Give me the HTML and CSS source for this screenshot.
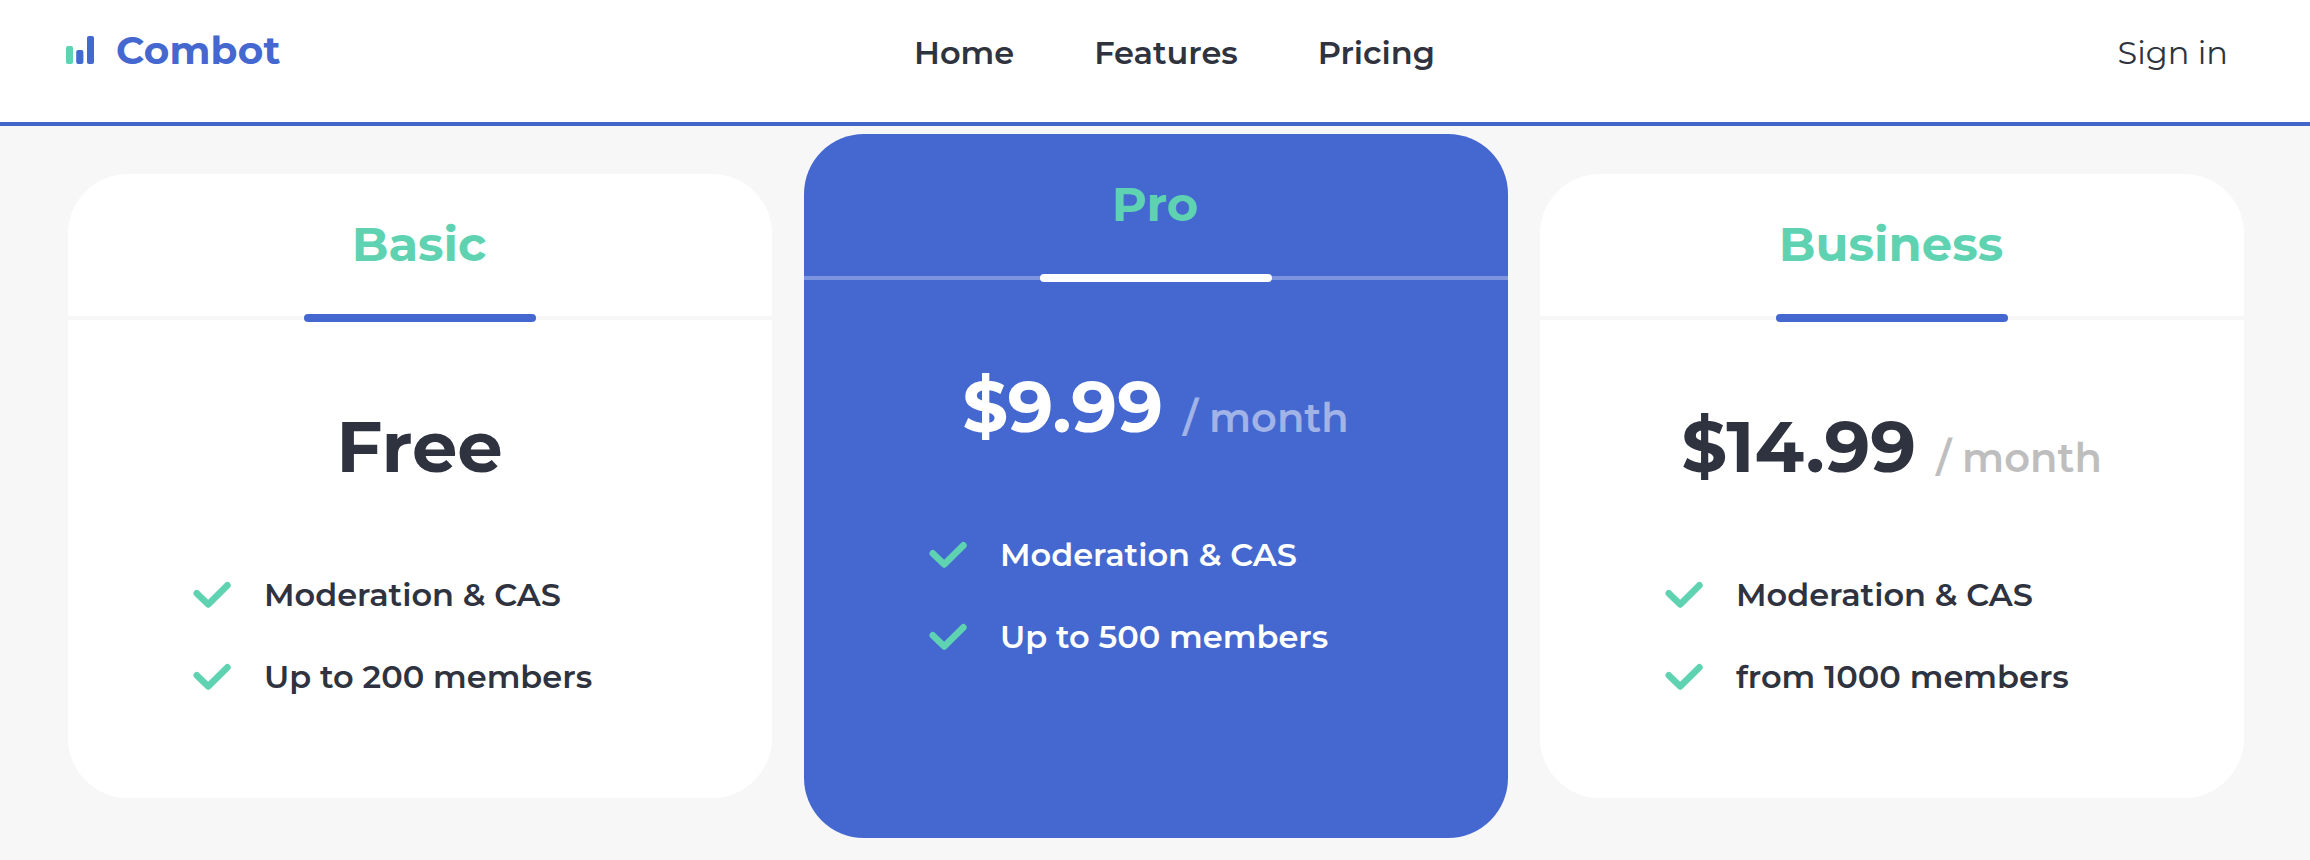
FILE: index.html
```html
<!DOCTYPE html>
<html lang="en">
<head>
  <meta charset="UTF-8"/>
  <meta name="viewport" content="width=device-width,initial-scale=1.0"/>
  <title>Combot - Pricing</title>
  <link rel="stylesheet" href="styles.css">
</head>
<body>
  <!-- Shared check icon -->
  <svg class="sprite" width="0" height="0">
    <symbol id="check" viewBox="0 0 40 30">
      <path d="M4.8 13.3L16.2 24.4L35.4 5.3"/>
    </symbol>
  </svg>

  <header class="header">
    <a class="logo" href="#">
      <svg class="logo-icon" viewBox="0 0 28 28">
        <rect class="bar-green" x="0" y="10" width="7" height="18" rx="2"/>
        <rect x="10.2" y="14" width="7.2" height="14" rx="2"/>
        <rect x="21" y="0" width="7" height="28" rx="2"/>
      </svg>
      <span class="logo-text">Combot</span>
    </a>
    <nav class="nav">
      <a href="#">Home</a>
      <a href="#">Features</a>
      <a href="#">Pricing</a>
    </nav>
    <a class="sign-in" href="#">Sign in</a>
  </header>

  <main class="plans">
    <section class="plan">
      <h2 class="plan-name">Basic</h2>
      <div class="price"><span class="amount">Free</span></div>
      <ul class="features">
        <li><svg class="check"><use href="#check"/></svg><span>Moderation &amp; CAS</span></li>
        <li><svg class="check"><use href="#check"/></svg><span>Up to 200 members</span></li>
      </ul>
    </section>

    <section class="plan plan-pro">
      <h2 class="plan-name">Pro</h2>
      <div class="price"><span class="amount">$9.99</span><span class="period">/ month</span></div>
      <ul class="features">
        <li><svg class="check"><use href="#check"/></svg><span>Moderation &amp; CAS</span></li>
        <li><svg class="check"><use href="#check"/></svg><span>Up to 500 members</span></li>
      </ul>
    </section>

    <section class="plan">
      <h2 class="plan-name">Business</h2>
      <div class="price"><span class="amount">$14.99</span><span class="period">/ month</span></div>
      <ul class="features">
        <li><svg class="check"><use href="#check"/></svg><span>Moderation &amp; CAS</span></li>
        <li><svg class="check"><use href="#check"/></svg><span>from 1000 members</span></li>
      </ul>
    </section>
  </main>
</body>
</html>
```
FILE: styles.css
```css
:root {
  --bg: #f7f7f7;
  --blue: #4468d0;
  --green: #5fd3b1;
  --text: #2f3340;
  --muted: #bebebe;
}
* { box-sizing: border-box; }
body {
  margin: 0;
  min-height: 860px;
  background: var(--bg); color: var(--text);
  font-family: Montserrat, Inter, sans-serif;
}
a { color: inherit; text-decoration: none; }
.sprite { position: absolute; }

.header {
  display: grid;
  grid-template-columns: 848px 1fr auto;
  align-items: center;
  height: 126px;
  padding: 0 82px 18px 66px;
  background: #fff;
  border-bottom: 4px solid #4267c9;
  font-size: 32px;
}
.logo {
  display: flex; align-items: center;
  height: 28px;
  margin-bottom: 4px;
  color: var(--blue);
}
.logo-icon { width: 28px; height: 28px; fill: currentColor; }
.bar-green { fill: var(--green); }
.logo-text {
  margin-left: 22px;
  font-size: 39px; font-weight: 700;
  letter-spacing: 0.2px;
  line-height: 28px;
}
.nav { display: flex; gap: 80px; font-weight: 600; }

.plans {
  display: flex; align-items: center;
  gap: 32px;
  padding: 8px 66px 22px 68px;
}
.plan {
  width: 704px; height: 624px;
  background: #fff;
  border-radius: 60px;
}
.plan-name {
  position: relative;
  height: 146px;
  margin: 0;
  padding-right: 2px;
  border-bottom: 4px solid var(--bg);
  color: var(--green);
  font-size: 48px; font-weight: 700;
  line-height: 140px;
  text-align: center;
}
/* accent bar over the divider */
.plan-name::after {
  content: "";
  position: absolute; left: 236px; bottom: -6px;
  width: 232px; height: 8px;
  border-radius: 4px;
  background: var(--blue);
}

.price {
  display: flex; align-items: baseline; justify-content: center;
  height: 234px;
  padding: 64px 1px 0 0;
  line-height: 124px;
}
.amount { font-size: 72px; font-weight: 700; }
.period {
  margin-left: 20px;
  color: var(--muted);
  font-size: 40px; font-weight: 600;
}

.features {
  margin: 0; padding: 0 0 0 124px;
  list-style: none;
  font-size: 32px; font-weight: 600;
}
.features li {
  display: flex; align-items: center;
  height: 82px;
}
.features span { padding-bottom: 2px; }
.check {
  width: 40px; height: 30px;
  margin-right: 32px;
  fill: none;
  stroke: var(--green); stroke-width: 6.6;
  stroke-linecap: round; stroke-linejoin: round;
}

.plan-pro {
  height: 704px;
  background: var(--blue); color: #fff;
}
.plan-pro .plan-name { border-bottom-color: rgba(255,255,255,0.3); }
.plan-pro .plan-name::after { background: #fff; }
.plan-pro .period { color: rgba(255,255,255,0.5); }
```
